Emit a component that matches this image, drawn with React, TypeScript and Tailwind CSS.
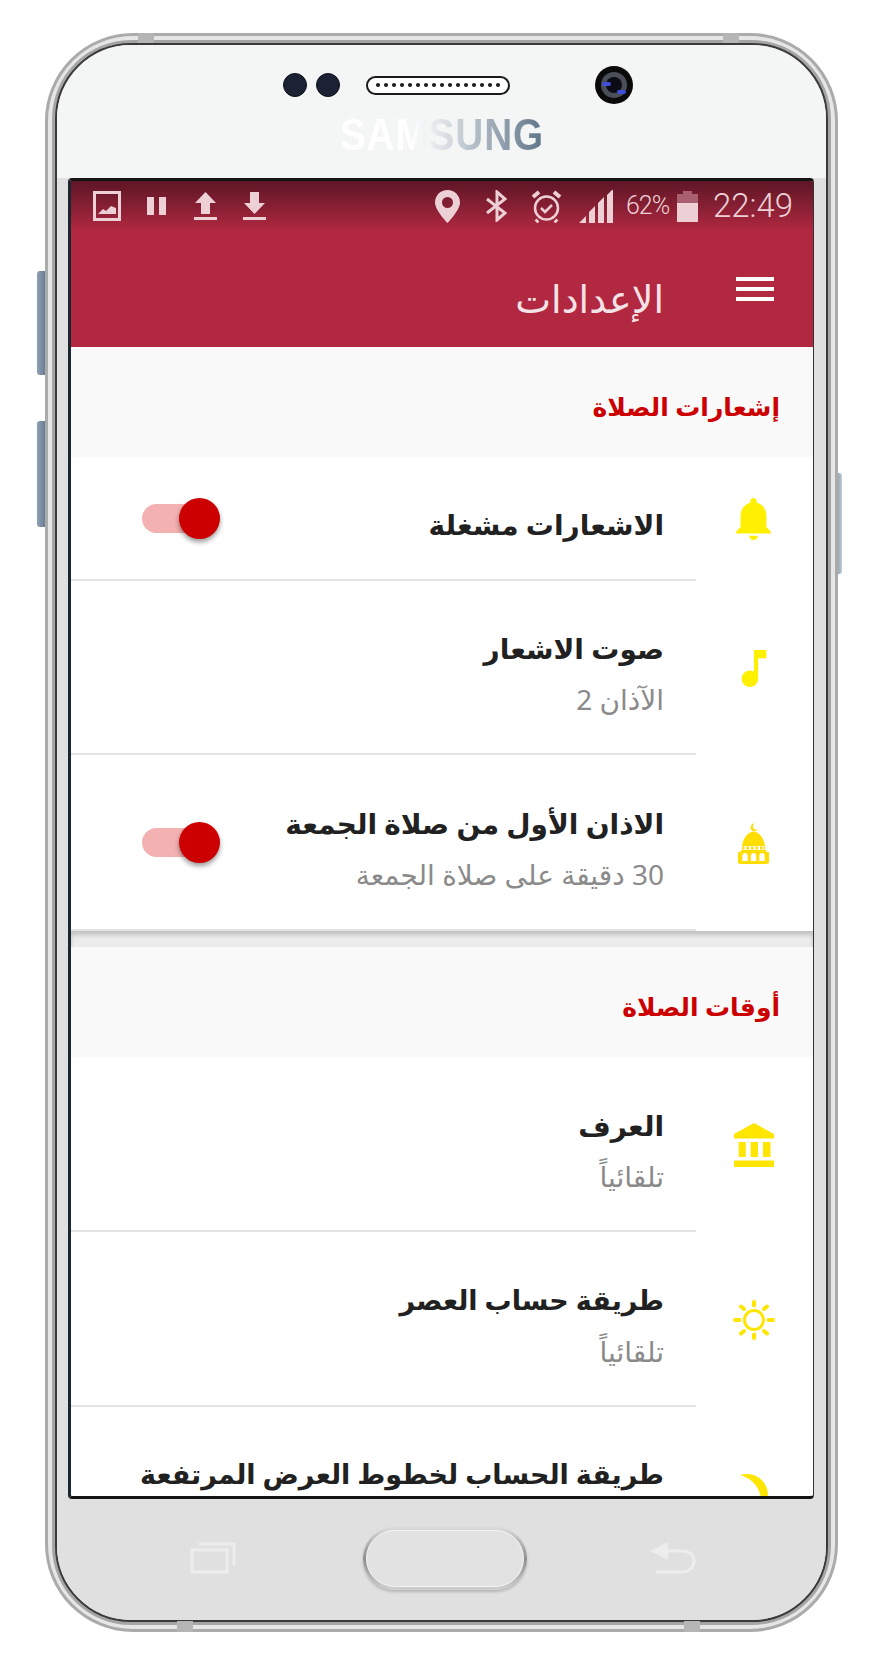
const arabic = "font-['Noto_Sans','DejaVu_Sans',sans-serif]"

function Bell() {
  return (
    <svg viewBox="4 2.5 16 19.5" className="w-[35px] h-[42px] fill-[#fff000]">
      <path d="M12 22c1.1 0 2-.9 2-2h-4c0 1.1.9 2 2 2zm6-6v-5c0-3.07-1.64-5.64-4.5-6.32V4c0-.83-.67-1.5-1.5-1.5s-1.5.67-1.5 1.5v.68C7.63 5.36 6 7.92 6 11v5l-2 2v1h16v-1l-2-2z" />
    </svg>
  )
}

function Note() {
  return (
    <svg viewBox="6 3 12 18" className="w-[26px] h-[37px] fill-[#fff000]">
      <path d="M12 3v10.55c-.59-.34-1.27-.55-2-.55-2.21 0-4 1.79-4 4s1.79 4 4 4 4-1.79 4-4V7h4V3h-6z" />
    </svg>
  )
}

function Mosque() {
  return (
    <svg viewBox="0 0 31 41" className="w-[31px] h-[41px] fill-[#ffdd00]">
      <path d="M16.500 0c-3.500 1-5 4.500-3 7 1.800 1.800 5 1.500 6.500-.5-2.500.8-4.800 0-5-2.200-.1-1.700.3-3.100 1.500-4.300z" />
      <path d="M15.500 8.500C9.500 9 5 15.500 4 23h23c-1-7.500-5.500-14-11.500-14.500z" />
      <path d="M4 23.500h2.500v3H4zm4.500 0H11v3H8.500zm4.500 0h2.500v3H13zm4.500 0H20v3h-2.500zm4.500 0h2.500v3H22zm3.500 0H27v3h-1.500z" />
      <path
        fillRule="evenodd"
        d="M3 27h25v1.500l3 1V39c0 1.200-.8 2-2 2H2c-1.200 0-2-.8-2-2v-9.500l3-1zM7 30c-1.500 0-2.700 1.200-2.700 2.700V38h5.400v-5.300C9.700 31.200 8.500 30 7 30zm8.500 0c-1.500 0-2.700 1.200-2.700 2.700V38h5.400v-5.300c0-1.500-1.200-2.700-2.700-2.700zm8.500 0c-1.500 0-2.700 1.200-2.700 2.700V38h5.400v-5.300c0-1.500-1.200-2.700-2.700-2.700z"
      />
    </svg>
  )
}

function Bank() {
  return (
    <svg viewBox="0 0 40 44" className="w-[40px] h-[44px] fill-[#ffe600]">
      <path d="M20 0l20 11v4.500H0V11zM4.700 19h7v15h-7zM16.700 19H24v15h-7.300zM29 19h7.500v15H29zM0 37.500h40V44H0z" />
    </svg>
  )
}

function Sun() {
  return (
    <svg viewBox="0 0 42 40" className="w-[42px] h-[40px] stroke-[#ffe600] fill-none" strokeLinecap="round">
      <circle cx="21" cy="20" r="9.500" strokeWidth="3" />
      <path strokeWidth="4" d="M21 2v3.500M21 34.500V38M2 20h4.500M35.500 20H40M8 6.500l3 2.500M34 6.500L31 9M8 33.500l3-2.500M34 33.500L31 31" />
    </svg>
  )
}

function Moon() {
  return (
    <svg viewBox="0 0 28 40" className="mt-[50px] w-[28px] h-[40px] fill-[#ffe600]">
      <path d="M0 1C14-3 28 6 28 22c0 8-3 14-8 18 2-6 2-10 1-16C19 12 11 4 0 1z" />
    </svg>
  )
}

function Toggle() {
  return (
    <div className="relative w-[79px] h-[41px] flex items-center">
      <div className="w-[60px] h-[29px] rounded-full bg-[#f3b1b1]" />
      <div className="absolute left-[37px] top-0 w-[41px] h-[41px] rounded-full bg-[#cc0000] shadow-[0_3px_5px_rgba(0,0,0,0.4)]" />
    </div>
  )
}

interface RowProps {
  icon: React.ReactNode
  title: string
  sub?: string
  toggle?: boolean
  height: string
  titleSize?: string
}

function Row({ icon, title, sub, toggle, height, titleSize = 'text-[28px]' }: RowProps) {
  return (
    <div className={`flex shrink-0 ${height}`}>
      <div className="w-[117px] shrink-0 flex items-center justify-center pr-[2px]">{icon}</div>
      <div className="flex-1 flex items-center justify-between border-b-2 border-[#e4e4e4] pr-[32px]">
        <div className="flex flex-col gap-[14px] pt-[12px]">
          <div className={`${titleSize} leading-[38px] font-bold text-[#212121] whitespace-nowrap`}>{title}</div>
          {sub && <div className="text-[28px] leading-[36px] text-[#8a8a8a] whitespace-nowrap">{sub}</div>}
        </div>
        {toggle && (
          <div className="pl-[71px]" dir="ltr">
            <Toggle />
          </div>
        )}
      </div>
    </div>
  )
}

function StatusBar() {
  return (
    <div dir="ltr" className="h-[50px] flex items-center pl-[22px] bg-gradient-to-b from-[#5e1626] to-[#b12840] text-[#edd0d6] font-['Roboto',sans-serif]">
      <svg viewBox="0 0 28 30" className="w-[28px] h-[30px]">
        <path fill="none" stroke="#edd0d6" strokeWidth="3" d="M1.500 1.500h25v27h-25z" />
        <path fill="#edd0d6" d="M5 23l5-5 3 2 5-5 5 2v6H5z" />
      </svg>
      <svg viewBox="0 0 19 18" className="ml-[26px] w-[19px] h-[18px] fill-[#edd0d6]">
        <path d="M0 0h7v18H0zM12 0h7v18h-7z" />
      </svg>
      <svg viewBox="0 0 23 28" className="ml-[28px] w-[23px] h-[28px] fill-[#edd0d6]">
        <path d="M11.500 0L22 11h-6v11H7V11H1zM0 25h23v3H0z" />
      </svg>
      <svg viewBox="0 0 23 28" className="ml-[26px] w-[23px] h-[28px] fill-[#edd0d6]">
        <path d="M7 0h9v11h6L11.500 22 1 11h6zM0 25h23v3H0z" />
      </svg>
      <svg viewBox="0 0 25 33" className="ml-[169px] w-[25px] h-[33px] fill-[#edd0d6]">
        <path fillRule="evenodd" d="M12.500 0C5.600 0 0 5.500 0 12.400 0 20 12.500 33 12.500 33S25 20 25 12.400C25 5.500 19.400 0 12.500 0zm0 7a5.500 5.500 0 110 11 5.500 5.500 0 010-11z" />
      </svg>
      <svg viewBox="0 0 22 32" className="ml-[25px] w-[22px] h-[32px] fill-none stroke-[#edd0d6]" strokeWidth="3">
        <path d="M2 9l18 14-8 7V2l8 7L2 23" />
      </svg>
      <svg viewBox="0 0 31 33" className="ml-[24px] w-[31px] h-[33px] fill-none stroke-[#edd0d6]">
        <circle cx="15.500" cy="18" r="11.500" strokeWidth="2.500" />
        <path strokeWidth="2.500" d="M10 18l4 4 7-7" />
        <path strokeWidth="4" d="M2 7l6-5M29 7l-6-5M7 30l-2 2M24 30l2 2" />
      </svg>
      <svg viewBox="0 0 34 33" className="ml-[17px] w-[34px] h-[33px] fill-[#edd0d6]">
        <path d="M0 33l7-7v7zM10 33V22l6-6v17zM19 33V13l6-6v26zM28 33V5l6-6v34z" />
      </svg>
      <span className="ml-[13px] w-[44px] text-[25px] font-light whitespace-nowrap tracking-[-1px]">62%</span>
      <div className="ml-[7px] w-[21px] h-[31px] flex flex-col items-center">
        <div className="w-[9px] h-[3px] bg-[#a86070]" />
        <div className="w-[21px] h-[9px] bg-[#a86070]" />
        <div className="w-[21px] h-[19px] bg-[#edd0d6]" />
      </div>
      <span className="ml-[15px] text-[33px] font-light whitespace-nowrap">22:49</span>
    </div>
  )
}

function Section({ title, height }: { title: string; height: string }) {
  return (
    <div className={`shrink-0 bg-[#f9f9f9] pr-[33px] pt-[41px] ${height}`}>
      <div className="text-[25px] leading-[36px] font-bold text-[#cc0000] whitespace-nowrap">{title}</div>
    </div>
  )
}

export default function App() {
  return (
    <div className="relative w-[880px] h-[1664px] bg-white overflow-hidden pl-[45px] pt-[33px]">
      {/* side keys */}
      <div className="absolute left-[37px] top-[271px] w-[8px] h-[104px] rounded-l-[3px] bg-gradient-to-r from-[#8fa1b3] to-[#6b7d90]" />
      <div className="absolute left-[37px] top-[421px] w-[8px] h-[106px] rounded-l-[3px] bg-gradient-to-r from-[#8fa1b3] to-[#6b7d90]" />
      <div className="absolute left-[838px] top-[473px] w-[4px] h-[101px] rounded-r-[3px] bg-gradient-to-r from-[#9aa8b6] to-[#c0ccd6]" />

      <div className="relative w-[793px] h-[1599px] rounded-[88px] border-[3px] border-[#ababab] bg-[#e6e6e6] p-[7px]">
        {/* antenna bands */}
        <div className="absolute left-[90px] top-[-3px] w-[16px] h-[10px] bg-[#b5b5b5]" />
        <div className="absolute left-[675px] top-[-3px] w-[16px] h-[10px] bg-[#b5b5b5]" />
        <div className="absolute left-[129px] bottom-[-3px] w-[16px] h-[11px] bg-[#b5b5b5]" />
        <div className="absolute left-[636px] bottom-[-3px] w-[16px] h-[11px] bg-[#b5b5b5]" />

        <div className="w-full h-full rounded-[76px] border-2 border-[#3a3a3a] shadow-[0_0_0_3px_#a5a5a5] overflow-hidden bg-[#e0e0e0] flex flex-col">
          {/* top bezel */}
          <div className="h-[133px] shrink-0 bg-[#f4f5f5] flex flex-col items-center">
            <div className="h-[80px] w-full flex items-center pl-[226px]">
              <div className="w-[24px] h-[24px] rounded-full bg-[#1a2233] border border-[#0c1018]" />
              <div className="ml-[9px] w-[24px] h-[24px] rounded-full bg-[#1a2233] border border-[#0c1018]" />
              <div className="ml-[26px] w-[144px] h-[19px] rounded-full border-2 border-[#1a1a1a] bg-white flex items-center justify-center gap-[4px]">
                {Array.from({ length: 16 }).map((_, i) => (
                  <div key={i} className="w-[4px] h-[4px] rounded-full bg-[#1a1a1a]" />
                ))}
              </div>
              <div className="relative ml-[85px] w-[38px] h-[38px] rounded-full bg-[#0a0a0a] flex items-center justify-center">
                <div className="w-[26px] h-[26px] rounded-full bg-[#4a4e58] flex items-center justify-center">
                  <div className="w-[16px] h-[16px] rounded-full bg-[#0c0c14]" />
                </div>
                <div className="absolute left-[7px] top-[16px] w-[9px] h-[4px] rounded-full bg-[#3f4fd8]" />
                <div className="absolute right-[7px] bottom-[10px] w-[9px] h-[4px] rounded-full bg-[#3f4fd8]" />
              </div>
            </div>
            <div className="-mt-[12px] scale-x-[0.88] text-[44px] leading-[44px] font-bold tracking-[1px] font-['Liberation_Sans',sans-serif] text-transparent bg-clip-text bg-gradient-to-r from-white via-[#dfe3e7] to-[#5f7488] from-[35%] via-[50%]">
              SAMSUNG
            </div>
          </div>

          {/* screen */}
          <div className="mx-[11px] mr-[12px] h-[1321px] shrink-0 rounded-[4px] border-y-[3px] border-l-[3px] border-r border-y-[#141414] border-l-[#1b2630] border-r-[#333] bg-white overflow-hidden flex flex-col">
            <div className="shrink-0 h-[166px] bg-[#b12840]">
              <StatusBar />
              <div className={`flex items-center justify-end pr-[39px] pt-[41px] ${arabic}`}>
                <div className="text-[38px] leading-[52px] text-[#f3e3e6] whitespace-nowrap" dir="rtl">الإعدادات</div>
                <div className="ml-[72px] -mt-[18px] w-[38px] flex flex-col gap-[6px]">
                  <div className="h-[4px] bg-white" />
                  <div className="h-[4px] bg-white" />
                  <div className="h-[4px] bg-white" />
                </div>
              </div>
            </div>

            <div dir="rtl" className={`flex flex-col ${arabic}`}>
              <Section title="إشعارات الصلاة" height="h-[110px]" />
              <Row height="h-[124px]" icon={<Bell />} title="الاشعارات مشغلة" toggle />
              <Row height="h-[174px]" icon={<Note />} title="صوت الاشعار" sub="الآذان 2" />
              <Row height="h-[176px]" icon={<Mosque />} title="الاذان الأول من صلاة الجمعة" sub="30 دقيقة على صلاة الجمعة" toggle />
              <div className="shrink-0 h-[16px] bg-[#ececec] shadow-[inset_0_4px_4px_rgba(0,0,0,0.18)]" />
              <Section title="أوقات الصلاة" height="h-[110px]" />
              <Row height="h-[175px]" icon={<Bank />} title="العرف" sub="تلقائياً" />
              <Row height="h-[175px]" icon={<Sun />} title="طريقة حساب العصر" titleSize="text-[27px]" sub="تلقائياً" />
              <Row height="h-[124px]" icon={<Moon />} title="طريقة الحساب لخطوط العرض المرتفعة" titleSize="text-[27px]" />
            </div>
          </div>

          {/* bottom bezel */}
          <div className="flex-1 bg-[#e0e0e0] flex items-start pt-[28px] pl-[133px]">
            <svg viewBox="0 0 46 32" className="mt-[15px] w-[46px] h-[32px] fill-none stroke-[#ededed]" strokeWidth="3">
              <path d="M2 8h35v22H2zM9 2h35v22" />
            </svg>
            <div className="ml-[127px] w-[164px] h-[63px] rounded-[32px] p-[3px] bg-gradient-to-b from-[#dcdcdc] via-[#8e8e8e] to-[#d0d0d0] shadow-[0_2px_3px_rgba(0,0,0,0.2)]">
              <div className="w-full h-full rounded-[29px] bg-[#e2e2e2] border border-[#f5f5f5]" />
            </div>
            <svg viewBox="0 0 46 32" className="ml-[123px] mt-[15px] w-[46px] h-[32px] fill-none stroke-[#ededed]" strokeWidth="3">
              <path fill="#ededed" stroke="none" d="M0 9L18 0v18z" />
              <path d="M16 9h16c7 0 12 4 12 10s-5 11-12 11H6" />
            </svg>
          </div>
        </div>
      </div>
    </div>
  )
}
